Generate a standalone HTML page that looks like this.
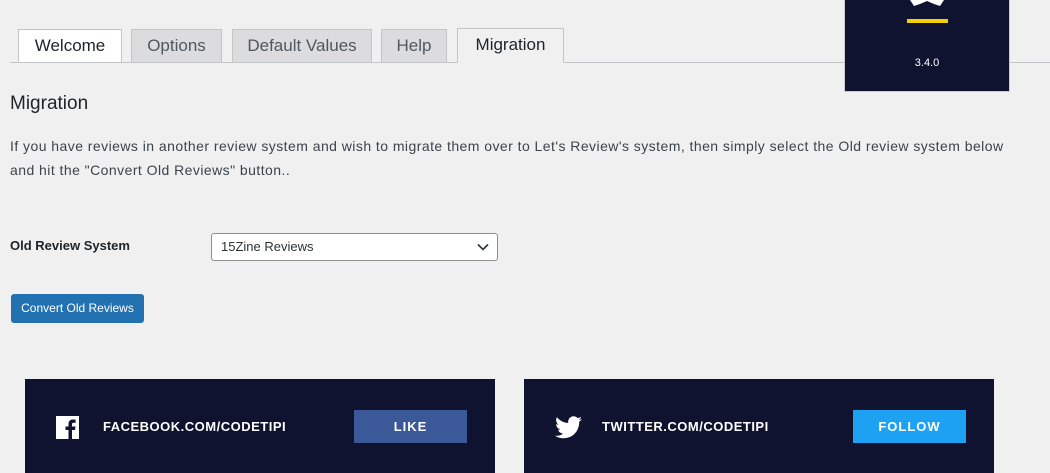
<!DOCTYPE html>
<html><head><style>
body{margin:0;width:1050px;height:473px;background:#f0f0f1;font-family:"Liberation Sans",sans-serif;position:relative;overflow:hidden;color:#1d2327}
.tab{position:absolute;top:29px;border:1px solid #c3c4c7;background:#dcdcde;color:#50575e;font-size:17px;line-height:32px;text-align:center;box-sizing:border-box;height:34px}
.line{position:absolute;left:10px;right:0;top:62px;border-top:1px solid #c3c4c7}
.ver{position:absolute;left:845px;top:0;width:164px;height:91px;background:#0f1330;box-shadow:0 0 0 1px #ccc}
.p{position:absolute;top:379px;height:94px;width:470px;background:#0f1330}
.p .t{position:absolute;left:78px;top:40px;color:#fff;font-weight:bold;font-size:13px;letter-spacing:.5px}
.p .b{position:absolute;left:329px;top:31px;width:113px;height:33px;color:#fff;font-weight:bold;font-size:13px;line-height:33px;text-align:center;letter-spacing:1px}
</style></head><body>
<div class="line"></div>
<div class="tab" style="left:18px;width:104px;background:#fff;color:#1d2327">Welcome</div>
<div class="tab" style="left:131px;width:91px">Options</div>
<div class="tab" style="left:232px;width:140px">Default Values</div>
<div class="tab" style="left:381px;width:66px">Help</div>
<div class="tab" style="left:457px;width:107px;top:28px;height:35px;background:#f0f0f1;color:#1d2327;border-bottom-color:#f0f0f1">Migration</div>
<div class="ver">
<svg style="position:absolute;left:62px;top:0" width="40" height="8" viewBox="0 0 40 8"><polygon points="3,0 37,0 33,6 27,4 20,1 13,4 7,6" fill="#fff"/></svg>
<div style="position:absolute;left:62px;top:19px;width:41px;height:4px;background:#f5d000"></div>
<div style="position:absolute;left:0;width:164px;top:57px;text-align:center;color:#fff;font-size:11px">3.4.0</div>
</div>
<div style="position:absolute;left:10px;top:93px;font-size:19px">Migration</div>
<div style="position:absolute;left:10px;top:134px;width:1010px;font-size:14px;line-height:24px;color:#3c434a;letter-spacing:.45px">If you have reviews in another review system and wish to migrate them over to Let's Review's system, then simply select the Old review system below and hit the "Convert Old Reviews" button..</div>
<div style="position:absolute;left:10px;top:238px;font-size:13px;font-weight:bold">Old Review System</div>
<div style="position:absolute;left:211px;top:233px;width:287px;height:28px;box-sizing:border-box;border:1px solid #8c8f94;border-radius:3px;background:#fff;font-size:13px;line-height:26px;padding-left:9px;color:#2c3338">15Zine Reviews
<svg style="position:absolute;right:8px;top:9px" width="12" height="8" viewBox="0 0 12 8"><path d="M1 1.5l5 5 5-5" stroke="#2c3338" stroke-width="1.6" fill="none"/></svg></div>
<div style="position:absolute;left:11px;top:294px;width:133px;height:29px;background:#2271b1;border-radius:3px;color:#fff;font-size:12px;line-height:29px;text-align:center">Convert Old Reviews</div>
<div class="p" style="left:25px">
<svg style="position:absolute;left:31px;top:37px" width="23" height="23" viewBox="0 0 23 23"><rect width="23" height="23" fill="#fff"/><path d="M16 23V14h3l.5-3.5H16V8.5c0-1 .3-1.7 1.8-1.7h1.8V3.7c-.3 0-1.4-.2-2.7-.2-2.7 0-4.4 1.6-4.4 4.6v2.4H9.5V14h3v9z" fill="#0f1330"/></svg>
<div class="t">FACEBOOK.COM/CODETIPI</div><div class="b" style="background:#3b5998">LIKE</div></div>
<div class="p" style="left:524px">
<svg style="position:absolute;left:31px;top:37px" width="27" height="23" viewBox="0 0 24 20"><path d="M24 2.4a10 10 0 0 1-2.8.8A4.9 4.9 0 0 0 23.3.4a9.8 9.8 0 0 1-3.1 1.2A4.9 4.9 0 0 0 11.8 6 14 14 0 0 1 1.7.9a4.9 4.9 0 0 0 1.5 6.6A4.9 4.9 0 0 1 1 6.9a4.9 4.9 0 0 0 3.9 4.9 4.9 4.9 0 0 1-2.2.1 4.9 4.9 0 0 0 4.6 3.4A9.9 9.9 0 0 1 0 17.3 14 14 0 0 0 7.5 19.5c9.1 0 14-7.5 14-14v-.6A10 10 0 0 0 24 2.4z" fill="#fff"/></svg>
<div class="t">TWITTER.COM/CODETIPI</div><div class="b" style="background:#1da1f2">FOLLOW</div></div>
</body></html>
